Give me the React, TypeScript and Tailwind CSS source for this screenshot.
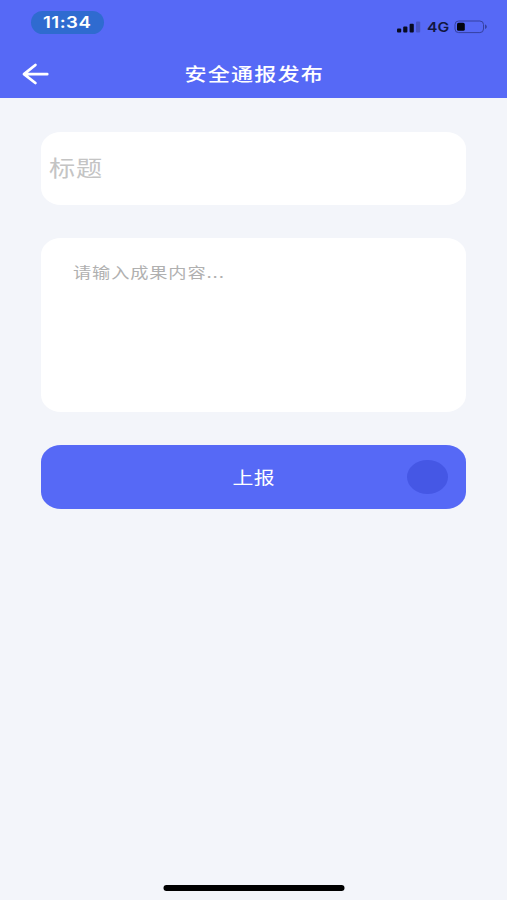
import React, { useState } from 'react';

const StatusBar: React.FC = () => (
  <div className="flex h-[49px] items-start justify-between pl-[31px] pr-[18px]">
    <div className="mt-[11px] flex h-[23px] w-[73px] items-center justify-center rounded-full bg-[#2f6bd0] text-white">
      <span className="scale-x-[1.2] whitespace-nowrap pt-px text-[15.5px] font-semibold leading-none tracking-[0.4px]">11:34</span>
    </div>
    <div className="mt-[19px] flex h-4 items-center">
      <svg width="24" height="12" viewBox="0 0 24 12" fill="#080b20">
        <rect x="0" y="7.4" width="4.2" height="4" rx="1" />
        <rect x="6.2" y="5.6" width="4.2" height="5.8" rx="1" />
        <rect x="12.6" y="2.8" width="4.2" height="8.6" rx="1" />
        <rect x="19" y="0.6" width="4.2" height="10.8" rx="1" fill="#4653c4" />
      </svg>
      <span className="ml-[6px] w-[22px] origin-left scale-x-[1.16] pt-px text-[13.5px] font-semibold leading-none text-[#12173f]">
        4G
      </span>
      <svg className="ml-[5px]" width="35" height="14" viewBox="0 0 35 14">
        <rect x="1" y="1" width="28.5" height="11.6" rx="3.6" fill="none" stroke="#3541a0" strokeWidth="1" />
        <rect x="3" y="2.8" width="7.8" height="8" rx="1.6" fill="#03040c" />
        <path d="M31 4.6c2.4.7 2.4 3.7 0 4.4z" fill="#3541a0" />
      </svg>
    </div>
  </div>
);

const NavBar: React.FC = () => (
  <div className="grid h-[49px] grid-cols-[1fr_auto_1fr] items-center pl-[22px] pr-[22px]">
    <button aria-label="返回" className="w-[27px]">
      <svg width="27" height="22" viewBox="0 0 27 22" fill="none" stroke="#fff" strokeWidth="2.8" strokeLinecap="round" strokeLinejoin="round">
        <path d="M13.4 2 2 11.2l11.4 8.8M2.6 11.2h22.6" />
      </svg>
    </button>
    <h1 className="scale-x-[1.2] whitespace-nowrap pl-px pt-[2px] text-[18.4px] font-medium leading-none tracking-[1px] text-white">
      安全通报发布
    </h1>
  </div>
);

const App: React.FC = () => {
  const [title, setTitle] = useState('');
  const [content, setContent] = useState('');

  return (
    <div className="flex h-[900px] w-[507px] flex-col overflow-hidden bg-[#f3f5fa] font-[Inter,'Noto_Sans_CJK_SC',sans-serif]">
      <header className="h-[98px] shrink-0 bg-[#5669f6]">
        <StatusBar />
        <NavBar />
      </header>

      <main className="flex flex-1 flex-col px-[41px] pt-[34px]">
        <div className="h-[73px] w-[425px] rounded-[20px/17px] bg-white pl-2">
          <input
            value={title}
            onChange={(e) => setTitle(e.target.value)}
            placeholder="标题"
            className="h-[72px] w-[340px] origin-left scale-x-[1.2] bg-transparent text-[21.8px] tracking-[0.7px] text-gray-700 outline-none placeholder:text-[#c4c4c4]"
          />
        </div>

        <div className="mt-[33px] h-[174px] w-[425px] rounded-[20px/17px] bg-white pl-8 pt-[23px]">
          <textarea
            value={content}
            onChange={(e) => setContent(e.target.value)}
            placeholder="请输入成果内容..."
            className="block h-[130px] w-[300px] origin-left resize-none scale-x-[1.2] bg-transparent text-[15.2px] leading-[23px] tracking-[0.7px] text-gray-700 outline-none placeholder:text-[#b0b0b0]"
          />
        </div>

        <button className="mt-[33px] grid h-[64px] w-[425px] grid-cols-[1fr_auto_1fr] items-center rounded-[20px/17px] bg-[#5669f6] text-white">
          <span className="col-start-2 scale-x-[1.2] pt-[2px] text-[17.4px] leading-none tracking-[0.4px]">上报</span>
          <span className="mr-[18px] h-[34px] w-[41px] justify-self-end rounded-[50%] bg-[#4557e5]" />
        </button>
      </main>

      <div className="mx-auto mb-[9px] h-[6px] w-[181px] shrink-0 translate-x-[0.5px] rounded-full bg-black" />
    </div>
  );
};

export default App;
